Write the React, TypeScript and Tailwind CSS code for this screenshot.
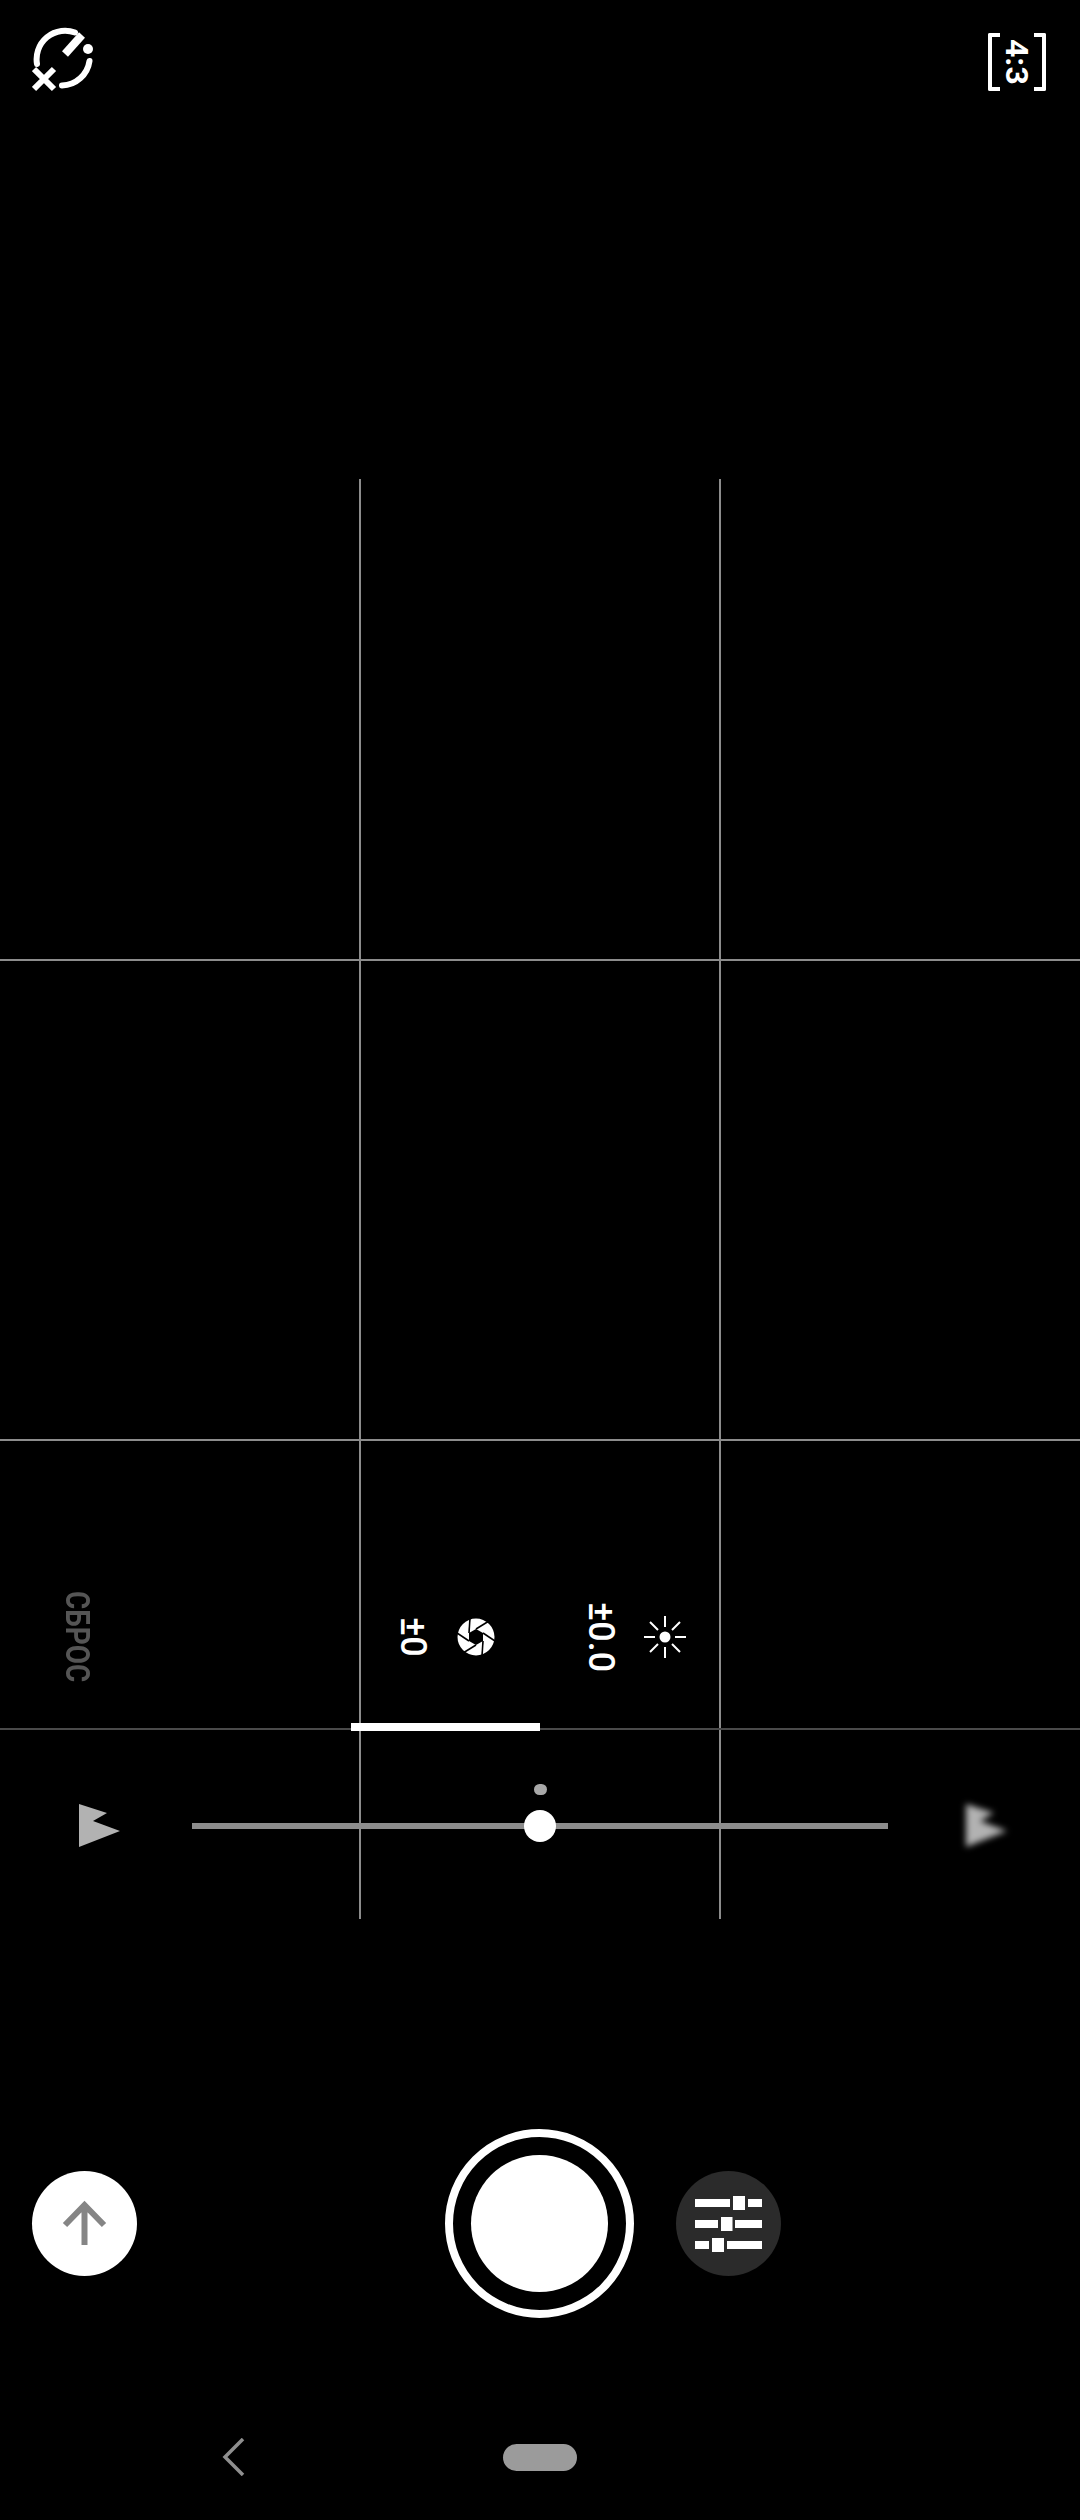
const FONT = "font-['Roboto',sans-serif]";

function TimerOffIcon() {
  return (
    <svg width="70" height="70" viewBox="0 0 70 70" fill="none" stroke="#fff">
      <path d="M43 5.500A28.500 28.500 0 0 0 5 37" strokeWidth="6" strokeLinecap="round" />
      <path d="M57.500 34A28.500 28.500 0 0 1 30 58.500" strokeWidth="6" strokeLinecap="round" />
      <path d="M50 8L33 27" strokeWidth="8" />
      <circle cx="56" cy="22" r="5" fill="#fff" stroke="none" />
      <path d="M2 42L22 62M22 42L2 62" strokeWidth="6" />
    </svg>
  );
}

function ApertureIcon() {
  return (
    <svg width="38" height="38" viewBox="0 0 38 38" fill="none">
      <circle cx="19" cy="19" r="18.500" fill="#fff" />
      <polygon points="19,11 26,15 26,23 19,27 12,23 12,15" fill="#000" />
      <g stroke="#000" strokeWidth="1.600">
        <path d="M12 15L13 0" />
        <path d="M19 11L32 3" />
        <path d="M26 15L38 23" />
        <path d="M26 23L25 38" />
        <path d="M19 27L6 35" />
        <path d="M12 23L0 15" />
      </g>
    </svg>
  );
}

function SunIcon() {
  return (
    <svg width="44" height="44" viewBox="0 0 44 44" fill="none" stroke="#fff" strokeWidth="2">
      <circle cx="22" cy="22" r="5.500" fill="#fff" stroke="none" />
      <path d="M22 1V12M22 32V43M1 22H12M32 22H43M7 7L15 15M29 29L37 37M37 7L29 15M15 29L7 37" />
    </svg>
  );
}

function FlagIcon({ color }: { color: string }) {
  return (
    <svg width="42" height="44" viewBox="0 0 42 44">
      <polygon points="0,0 28,9 14,17 41,27 0,43" fill={color} />
    </svg>
  );
}

function SlidersIcon() {
  return (
    <svg width="105" height="105" viewBox="0 0 105 105" fill="#fff">
      <rect x="19" y="28" width="35" height="8" />
      <rect x="57" y="25" width="12" height="14" />
      <rect x="72" y="28" width="14" height="8" />
      <rect x="19" y="49" width="23" height="8" />
      <rect x="45" y="46" width="11.500" height="14" />
      <rect x="59" y="49" width="27" height="8" />
      <rect x="19" y="70" width="14" height="8" />
      <rect x="36" y="67" width="12" height="14" />
      <rect x="51" y="70" width="35" height="8" />
    </svg>
  );
}

function GridOverlay() {
  return (
    <div className="absolute inset-0 pointer-events-none">
      <div className="absolute left-[359px] top-[479px] h-[1440px] w-[2px] bg-[#8c8c8c]" />
      <div className="absolute left-[719px] top-[479px] h-[1440px] w-[2px] bg-[#8c8c8c]" />
      <div className="absolute left-0 top-[959px] h-[2px] w-full bg-[#8c8c8c]" />
      <div className="absolute left-0 top-[1439px] h-[2px] w-full bg-[#8c8c8c]" />
      <div className="absolute left-0 top-[1728px] h-[2px] w-full bg-[#4a4a4a]" />
    </div>
  );
}

export default function App() {
  return (
    <div className={`relative w-[1080px] h-[2520px] bg-black overflow-hidden text-white ${FONT}`}>
      <GridOverlay />
      <div className="relative flex flex-col">
        {/* top bar */}
        <div className="flex h-[1592px] items-start justify-between pl-[32px] pr-[34px] pt-[27px]">
          <TimerOffIcon />
          <div className="mt-[6px] flex h-[58px] w-[58px] items-center justify-between">
            <div className="h-full w-[12px] rounded-l-[2px] border-y-4 border-l-4 border-white" />
            <span className="[writing-mode:vertical-rl] [text-orientation:sideways] text-[32px] font-bold leading-none">4:3</span>
            <div className="h-full w-[12px] rounded-r-[2px] border-y-4 border-r-4 border-white" />
          </div>
        </div>

        {/* mode tabs */}
        <div className="flex h-[90px] items-center">
          <span className="ml-[65px] w-[26px] scale-y-[0.82] [writing-mode:vertical-rl] [text-orientation:sideways] text-[34px] font-bold leading-[26px] text-[#555555]">
            СБРОС
          </span>
          <span className="ml-[308px] w-[28px] [writing-mode:vertical-rl] [text-orientation:sideways] text-[36px] font-medium leading-[28px]">±0</span>
          <span className="ml-[30px] flex">
            <ApertureIcon />
          </span>
          <span className="ml-[92px] w-[28px] [writing-mode:vertical-rl] [text-orientation:sideways] text-[36px] font-medium leading-[28px]">±0.0</span>
          <span className="ml-[28px] flex">
            <SunIcon />
          </span>
        </div>

        {/* selected tab */}
        <div className="ml-[351px] mt-[41px] h-[8px] w-[189px] bg-white" />

        {/* exposure slider */}
        <div className="mt-[72px] flex h-[46px] items-center">
          <div className="ml-[79px] flex">
            <FlagIcon color="#b2b2b2" />
          </div>
          <div className="relative ml-[71px] h-[6px] w-[696px] bg-[#8c8c8c]">
            <div className="absolute left-[342px] top-[-39px] h-[11px] w-[13px] rounded-full bg-[#a8a8a8]" />
            <div className="absolute left-[332px] top-[-13px] h-[32px] w-[32px] rounded-full bg-white" />
          </div>
          <div className="ml-[78px] flex blur-[3px]">
            <FlagIcon color="#b2b2b2" />
          </div>
        </div>

        {/* shutter row */}
        <div className="mt-[280px] flex h-[189px] items-center">
          <button className="ml-[32px] flex h-[105px] w-[105px] items-center justify-center rounded-full bg-white">
            <svg width="105" height="105" viewBox="0 0 105 105" fill="none" stroke="#858585" strokeWidth="6">
              <path d="M33 54L52.500 34L72 54M52.500 35V74" />
            </svg>
          </button>
          <button className="ml-[308px] flex h-[189px] w-[189px] items-center justify-center rounded-full border-[8px] border-white">
            <div className="h-[137px] w-[137px] rounded-full bg-white" />
          </button>
          <button className="ml-[42px] flex h-[105px] w-[105px] items-center justify-center rounded-full bg-[#2b2b2b]">
            <SlidersIcon />
          </button>
        </div>

        {/* nav bar */}
        <div className="mt-[121px] flex h-[36px] items-center">
          <svg className="ml-[222px]" width="24" height="38" viewBox="0 0 24 38" fill="none" stroke="#8f8f8f" strokeWidth="3.500">
            <path d="M21 1L3 19L21 37" />
          </svg>
          <div className="ml-[257px] h-[27px] w-[74px] rounded-full bg-[#9b9b9b]" />
        </div>
      </div>
    </div>
  );
}
